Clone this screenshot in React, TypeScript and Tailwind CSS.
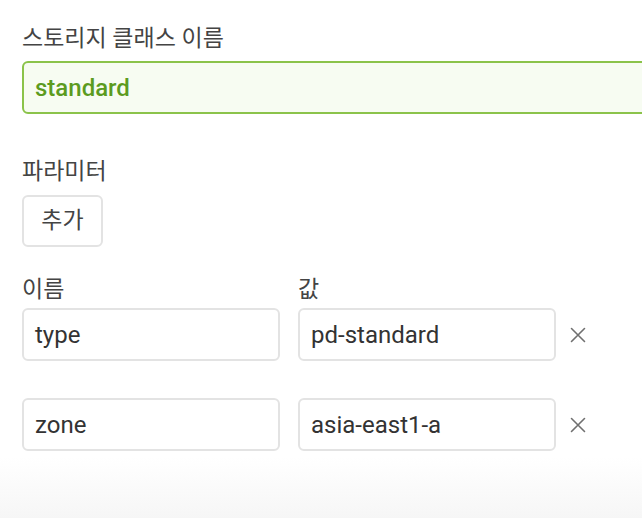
const params = [
  { name: 'type', value: 'pd-standard' },
  { name: 'zone', value: 'asia-east1-a' },
];

const font = "font-['Roboto','Noto_Sans_CJK_KR',sans-serif]";

function CloseIcon() {
  return (
    <svg width="16" height="16" viewBox="0 0 16 16" className="ml-[14px] text-[#707070]">
      <path d="M1.5 1.5l13 13M14.5 1.5l-13 13" stroke="currentColor" strokeWidth="1.6" strokeLinecap="round" />
    </svg>
  );
}

export default function App() {
  return (
    <div className={`h-[518px] w-[642px] overflow-hidden bg-white ${font} text-[#444]`}>
      <div className="pl-[22px] pt-[24px]">
        <label className="block h-[30px] text-[23px] leading-[30px]">스토리지 클래스 이름</label>
        <div className="mt-[7px] flex h-[53px] w-[650px] items-center rounded-[6px] border-2 border-[#8bc34a] bg-[#f7fcf2] px-[11px]">
          <span className="text-[24px] font-medium text-[#5c9b1f]">standard</span>
        </div>

        <label className="mt-[43px] block h-[30px] text-[23px] leading-[30px]">파라미터</label>
        <button className="mt-[8px] flex h-[52px] w-[81px] items-center justify-center rounded-[6px] border-2 border-[#e3e3e3] bg-white text-[23px] text-[#444]">
          추가
        </button>

        <div className="mt-[28px] flex gap-[18px]">
          <span className="w-[258px] text-[23px] leading-[30px]">이름</span>
          <span className="w-[258px] text-[23px] leading-[30px]">값</span>
        </div>

        <div className="mt-[3px] flex flex-col gap-[37px]">
          {params.map((p) => (
            <div key={p.name} className="flex items-center">
              <div className="flex h-[53px] w-[258px] items-center rounded-[6px] border-2 border-[#e3e3e3] px-[11px] text-[24px] text-[#333]">
                {p.name}
              </div>
              <div className="ml-[18px] flex h-[53px] w-[258px] items-center rounded-[6px] border-2 border-[#e3e3e3] px-[11px] text-[24px] text-[#333]">
                {p.value}
              </div>
              <CloseIcon />
            </div>
          ))}
        </div>
      </div>
      <div className="mt-[6px] h-[62px] bg-gradient-to-b from-white to-[#f6f6f6]" />
    </div>
  );
}
